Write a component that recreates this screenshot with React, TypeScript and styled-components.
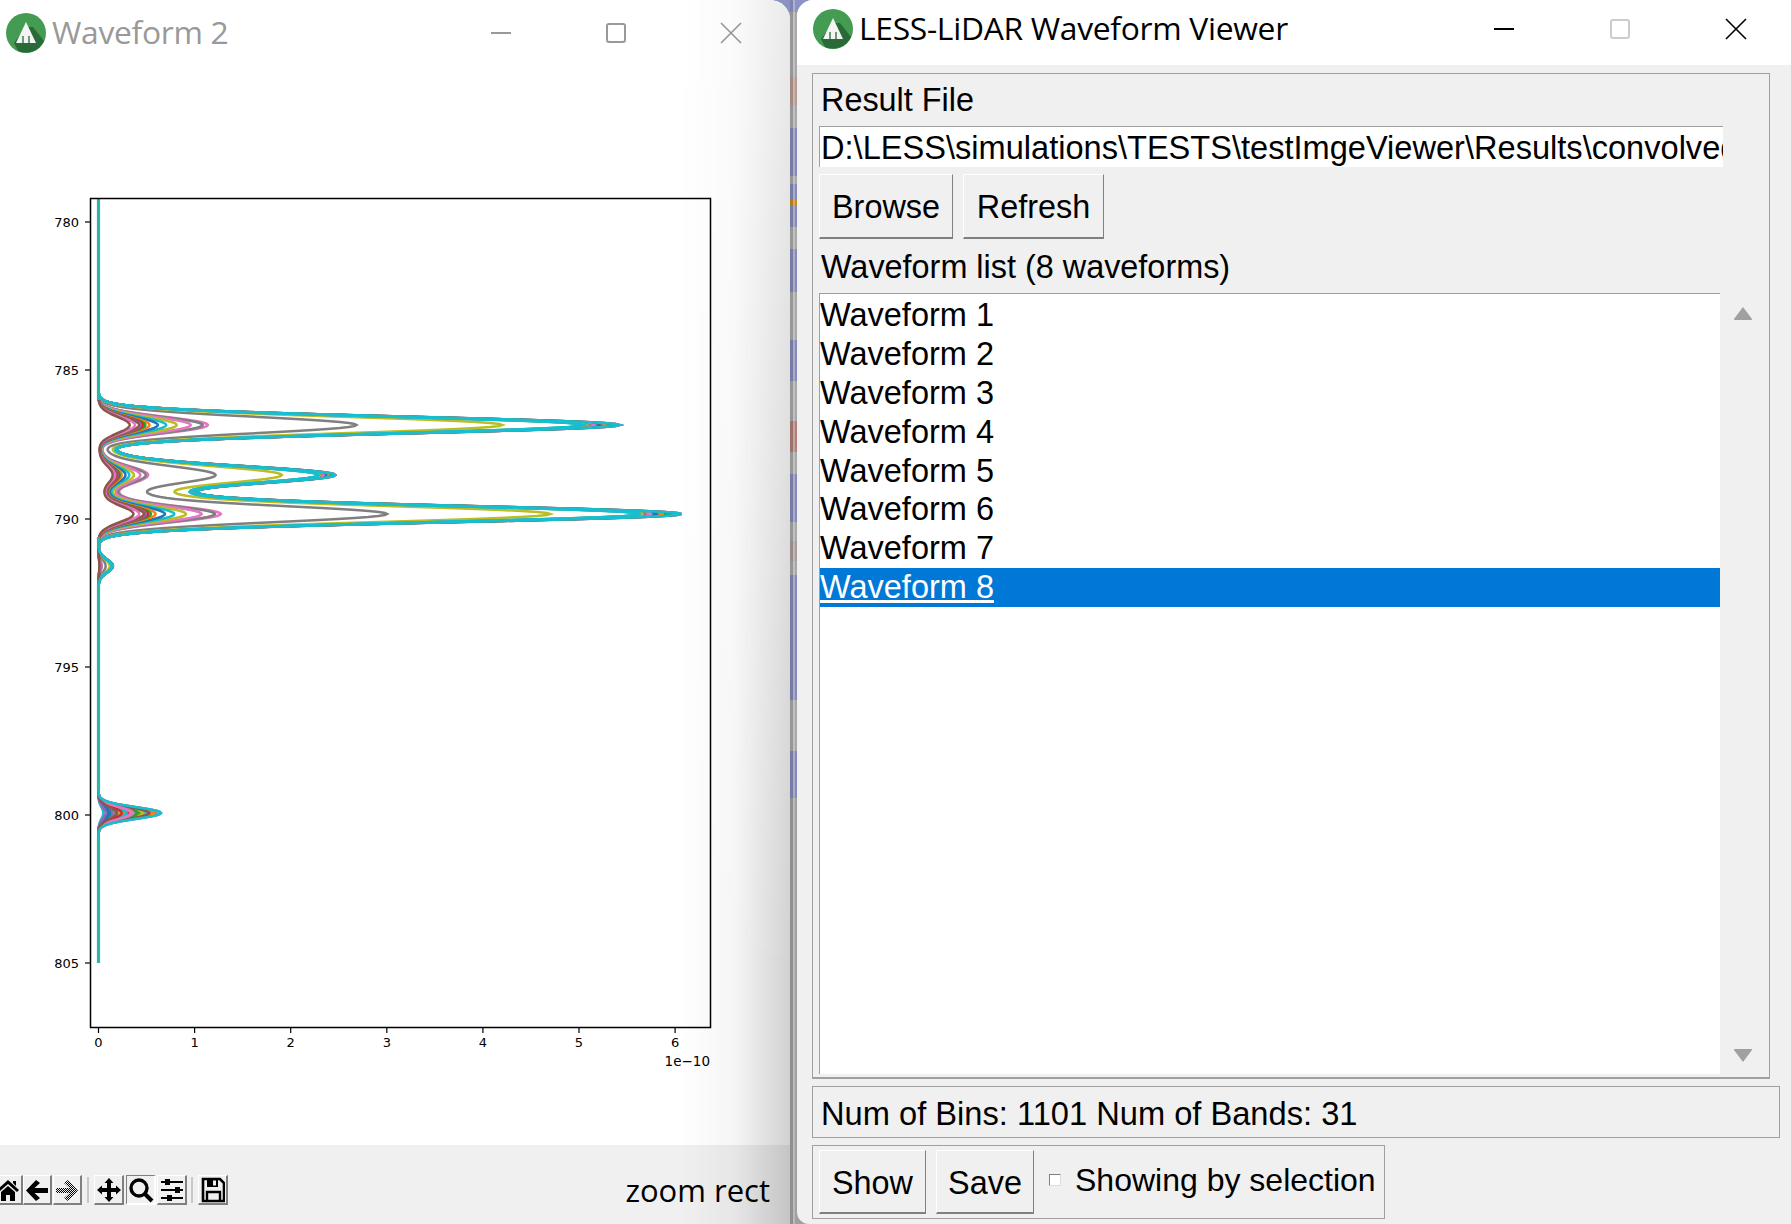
import React from 'react'
import styled, { createGlobalStyle } from 'styled-components'

const GlobalStyle = createGlobalStyle`
  html, body {
    margin: 0;
    padding: 0;
    width: 1791px;
    height: 1224px;
    overflow: hidden;
    background: #9a9a9a;
  }
`

const Desktop = styled.div`
  display: flex;
  width: 1791px;
  height: 1224px;
  overflow: hidden;
  background-color: #a6a6a6;
  background-image:
    linear-gradient(to right,
      transparent 790px, rgba(0, 0, 0, 0.1) 790px, rgba(0, 0, 0, 0.1) 793px,
      rgba(255, 255, 255, 0.28) 793px, rgba(255, 255, 255, 0.28) 795px, transparent 795px),
    linear-gradient(to bottom,
      #8d92c4 0, #8d92c4 12px, #a8a8a8 12px, #a8a8a8 77px, #b59a90 77px, #b59a90 105px,
      #a8a8a8 105px, #a8a8a8 128px, #858ab8 128px, #858ab8 176px, #a8a8a8 176px, #a8a8a8 184px,
      #858ab8 184px, #858ab8 200px, #c88a20 200px, #c88a20 206px, #858ab8 206px, #858ab8 227px,
      #a8a8a8 227px, #a8a8a8 249px, #858ab8 249px, #858ab8 292px, #a8a8a8 292px, #a8a8a8 340px,
      #858ab8 340px, #858ab8 381px, #a8a8a8 381px, #a8a8a8 421px, #b07f78 421px, #b07f78 452px,
      #a8a8a8 452px, #a8a8a8 474px, #858ab8 474px, #858ab8 522px, #a8a8a8 522px, #a8a8a8 541px,
      #a89c98 541px, #a89c98 561px, #a8a8a8 561px, #a8a8a8 575px, #858ab8 575px, #858ab8 700px,
      #a8a8a8 700px, #a8a8a8 751px, #858ab8 751px, #858ab8 798px, #a0a0a0 798px, #a0a0a0 1224px);
  font-family: "Liberation Sans", Arial, sans-serif;
`
const LeftWindow = styled.div`
  position: relative;
  display: flex;
  flex-direction: column;
  flex: none;
  width: 790px;
  height: 1224px;
  background: #fff;
  border-top-right-radius: 20px;
  overflow: hidden;

  &::after {
    content: '';
    position: absolute;
    top: 0;
    right: 0;
    bottom: 0;
    width: 110px;
    background: linear-gradient(to right, rgba(0, 0, 0, 0), rgba(0, 0, 0, 0.04) 50%, rgba(0, 0, 0, 0.18));
    -webkit-mask-image: linear-gradient(to bottom, rgba(0, 0, 0, 0.45), #000 80%);
    mask-image: linear-gradient(to bottom, rgba(0, 0, 0, 0.45), #000 80%);
    pointer-events: none;
  }
`
const RightWindow = styled.div`
  display: flex;
  flex-direction: column;
  flex: none;
  width: 994px;
  height: 1224px;
  margin-left: 7px;
  background: #f0f0f0;
  border-top-left-radius: 16px;
  border-bottom-left-radius: 12px;
  overflow: hidden;
`
const TitleBar = styled.div<{ $left: number; $height: number; $lift?: number; $inactive?: boolean }>`
  display: flex;
  flex: none;
  box-sizing: border-box;
  align-items: center;
  gap: 6px;
  height: ${(p) => p.$height}px;
  padding-left: ${(p) => p.$left}px;
  padding-bottom: ${(p) => p.$lift ?? 0}px;
  background: #fff;
  color: ${(p) => (p.$inactive ? '#999' : '#000')};
`
const TitleText = styled.span`
  margin-bottom: 3px;
  font-family: "Open Sans", sans-serif;
  font-size: 31.8px;
  letter-spacing: -0.3px;
  white-space: nowrap;
`
const Controls = styled.div<{ $gap: number; $right: number }>`
  display: flex;
  align-items: center;
  gap: ${(p) => p.$gap}px;
  margin-left: auto;
  margin-right: ${(p) => p.$right}px;
`
const Canvas = styled.div`
  flex: 1;
  min-height: 0;

  svg {
    display: block;
  }
`
const Toolbar = styled.div`
  display: flex;
  flex: none;
  box-sizing: border-box;
  align-items: center;
  height: 79px;
  padding: 11px 20px 0 0;
  background: #f0f0f0;
`
const ToolButton = styled.div<{ $sunken?: boolean; $width?: number; $gapAfter?: number }>`
  display: flex;
  flex: none;
  align-items: center;
  justify-content: center;
  box-sizing: border-box;
  width: ${(p) => p.$width ?? 30}px;
  height: 30px;
  margin-right: ${(p) => p.$gapAfter ?? 0}px;
  border-style: solid;
  border-width: 1px 2px 2px 1px;
  border-color: ${(p) => (p.$sunken ? '#808080 #fff #fff #808080' : '#fff #808080 #808080 #fff')};

  &:first-child {
    margin-left: -7px;
  }
`
const ToolSeparator = styled.div<{ $before: number }>`
  flex: none;
  width: 2px;
  height: 26px;
  margin: 0 5px 0 ${(p) => p.$before}px;
  background: #c8c8c8;
`
const ToolMessage = styled.span`
  margin-left: auto;
  font-family: "Open Sans", sans-serif;
  font-size: 31px;
  color: #000;
`
const Body = styled.div`
  display: flex;
  flex: 1;
  flex-direction: column;
  min-height: 0;
  padding: 8px 12px 6px 15px;
`
const Group = styled.div`
  box-sizing: border-box;
  display: flex;
  flex-direction: column;
  flex: none;
  height: 1006px;
  width: 958px;
  padding: 0 0 3px 6px;
  border: 1px solid #a0a0a0;
  border-bottom-width: 2px;
`
const FieldLabel = styled.div`
  flex: none;
  height: 52px;
  padding-left: 2px;
  font-size: 32.4px;
  line-height: 52px;
  color: #000;
  white-space: nowrap;
`
const PathField = styled.div`
  box-sizing: border-box;
  flex: none;
  width: 904px;
  height: 41px;
  padding-left: 1px;
  overflow: hidden;
  background: #fff;
  border-top: 1px solid #a0a0a0;
  border-left: 1px solid #a0a0a0;
  font-size: 32.6px;
  line-height: 42px;
  color: #000;
  white-space: nowrap;
`
const ButtonRow = styled.div`
  display: flex;
  flex: none;
  gap: 10px;
  margin: 7px 0 2px;
`
const PushButton = styled.div<{ $width: number; $height: number; $textHeight: number }>`
  box-sizing: border-box;
  flex: none;
  width: ${(p) => p.$width}px;
  height: ${(p) => p.$height}px;
  border-style: solid;
  border-width: 1px 1px 2px 1px;
  border-color: #fff #808080 #808080 #fff;
  font-size: 32.4px;
  line-height: ${(p) => p.$textHeight}px;
  text-align: center;
  color: #000;
`
const ListArea = styled.div`
  display: flex;
  flex: 1;
  min-height: 0;
`
const ListBox = styled.div`
  box-sizing: border-box;
  flex: none;
  width: 901px;
  padding-top: 2px;
  background: #fff;
  border-top: 1px solid #a0a0a0;
  border-left: 1px solid #a0a0a0;
`
const ListRow = styled.div<{ $selected?: boolean }>`
  height: 38.9px;
  background: ${(p) => (p.$selected ? '#0078d7' : 'transparent')};
  color: ${(p) => (p.$selected ? '#fff' : '#000')};
  font-size: 32.5px;
  line-height: 39px;
  white-space: nowrap;
  text-decoration: ${(p) => (p.$selected ? 'underline' : 'none')};
`
const ScrollColumn = styled.div`
  display: flex;
  flex: 1;
  flex-direction: column;
  align-items: center;
  justify-content: space-between;
  padding: 13px 3px 11px 0;
`
const StatusBox = styled.div`
  box-sizing: border-box;
  flex: none;
  width: 968px;
  height: 52px;
  margin-top: 7px;
  padding-left: 8px;
  border: 1px solid #a0a0a0;
  font-size: 32.65px;
  line-height: 53px;
  color: #000;
  white-space: nowrap;
`
const ActionBox = styled.div`
  box-sizing: border-box;
  display: flex;
  flex: none;
  align-items: flex-start;
  gap: 10px;
  width: 573px;
  height: 74px;
  margin-top: 7px;
  padding: 4px 6px;
  border: 1px solid #a0a0a0;
`
const CheckRow = styled.div`
  display: flex;
  align-items: center;
  gap: 14px;
  height: 60px;
  margin-left: 5px;
  font-size: 32px;
  color: #000;
  white-space: nowrap;
`
const CheckMark = styled.div`
  box-sizing: border-box;
  flex: none;
  width: 12px;
  height: 12px;
  background: #fff;
  border-top: 1px solid #808080;
  border-left: 1px solid #808080;
  border-right: 1px solid #ddd;
  border-bottom: 1px solid #ddd;
`

const LogoIcon: React.FC = () => (
  <svg width="40" height="40" viewBox="0 0 40 40">
    <circle cx="20" cy="20" r="20" fill="#449c53" />
    <path d="M8 30 L20 14 L27 14 L38 28 A20 20 0 0 1 12 38 Z" fill="#2a6a38" />
    <path d="M20 9 L30 30 L10 30 Z" fill="#f4f4f4" />
    <rect x="16" y="23" width="2" height="7" fill="#6d9a75" />
    <rect x="22" y="23" width="2" height="7" fill="#6d9a75" />
  </svg>
)

const WindowButtons: React.FC<{ color: string; maxColor: string; gap: number; right: number }> = ({ color, maxColor, gap, right }) => (
  <Controls $gap={gap} $right={right}>
    <svg width="22" height="22" viewBox="0 0 22 22">
      <path d="M1 11 H21" stroke={color} strokeWidth="2" />
    </svg>
    <svg width="22" height="22" viewBox="0 0 22 22">
      <rect x="2" y="2" width="18" height="18" rx="2" fill="none" stroke={maxColor} strokeWidth="2" />
    </svg>
    <svg width="22" height="22" viewBox="0 0 22 22">
      <path d="M1 1 L21 21 M21 1 L1 21" stroke={color} strokeWidth="1.6" fill="none" />
    </svg>
  </Controls>
)

const HomeIcon = () => (
  <svg width="24" height="24" viewBox="0 0 24 24">
    <path d="M12 2 L23 12 L21 14 L12 6 L3 14 L1 12 Z M17 3 H20 V8 L17 5 Z" fill="#000" />
    <path d="M5 14 L12 8 L19 14 V23 H14 V17 H10 V23 H5 Z" fill="#000" />
  </svg>
)
const BackIcon = () => (
  <svg width="24" height="24" viewBox="0 0 24 24">
    <path d="M11 2 L15 5 L9.5 10 H23 V15 H9.5 L15 20 L11 23 L1 12.5 Z" fill="#000" />
  </svg>
)
const ForwardIcon = () => (
  <svg width="24" height="24" viewBox="0 0 24 24">
    <defs>
      <pattern id="dither" width="2" height="2" patternUnits="userSpaceOnUse">
        <rect width="1" height="1" fill="#000" />
        <rect x="1" y="1" width="1" height="1" fill="#000" />
      </pattern>
    </defs>
    <path d="M13 2 L9 5 L14.5 10 H1 V15 H14.5 L9 20 L13 23 L23 12.5 Z" fill="url(#dither)" />
  </svg>
)
const MoveIcon = () => (
  <svg width="26" height="26" viewBox="0 0 26 26">
    <path d="M13 1 L17.5 6 H15 V11 H20 V8.5 L25 13 L20 17.5 V15 H15 V20 H17.5 L13 25 L8.5 20 H11 V15 H6 V17.5 L1 13 L6 8.5 V11 H11 V6 H8.5 Z" fill="#000" />
  </svg>
)
const ZoomIcon = () => (
  <svg width="26" height="26" viewBox="0 0 26 26">
    <circle cx="11" cy="11" r="8" fill="none" stroke="#000" strokeWidth="3.4" />
    <path d="M16.5 16.5 L24 24" stroke="#000" strokeWidth="4" />
  </svg>
)
const SlidersIcon = () => (
  <svg width="26" height="26" viewBox="0 0 26 26">
    <path d="M2 5 H24 M2 13 H24 M2 21 H24" stroke="#000" strokeWidth="2" />
    <rect x="6" y="2" width="5" height="6" fill="#000" />
    <rect x="16" y="10" width="5" height="6" fill="#000" />
    <rect x="8" y="18" width="5" height="6" fill="#000" />
  </svg>
)
const SaveIcon = () => (
  <svg width="24" height="26" viewBox="0 0 24 26">
    <path d="M2 2 H19 L23 6 V24 H2 Z" fill="none" stroke="#000" strokeWidth="2.6" />
    <path d="M6 2 H17 V10 H6 Z" fill="#000" />
    <rect x="12" y="3.5" width="3" height="5" fill="#f0f0f0" />
    <path d="M6 24 V15 H19 V24" fill="none" stroke="#000" strokeWidth="2.4" />
  </svg>
)

const ArrowUp = () => (
  <svg width="20" height="15" viewBox="0 0 20 15">
    <path d="M10 1 L19 13 Q19.5 14 18 14 H2 Q0.5 14 1 13 Z" fill="#a0a0a0" />
  </svg>
)
const ArrowDown = () => (
  <svg width="20" height="15" viewBox="0 0 20 15">
    <path d="M10 14 L19 2 Q19.5 1 18 1 H2 Q0.5 1 1 2 Z" fill="#a0a0a0" />
  </svg>
)

// curves: [colour, share of the highest peak], drawn in this order
const BANDS: [string, number][] = [
  ['#7f7f7f', 0.495],
  ['#bcbd22', 0.775],
  ['#d62728', 1.0],
  ['#9467bd', 1.0],
  ['#8c564b', 0.99],
  ['#2ca02c', 0.98],
  ['#ff7f0e', 0.97],
  ['#1f77b4', 0.96],
  ['#e377c2', 0.95],
  ['#7f7f7f', 0.94],
  ['#bcbd22', 0.935],
  ['#17becf', 1.0],
  ['#17becf', 0.93],
  ['#e377c2', 0.21],
  ['#7f7f7f', 0.2],
  ['#e377c2', 0.177],
  ['#bcbd22', 0.15],
  ['#17becf', 0.13],
  ['#1f77b4', 0.114],
  ['#ff7f0e', 0.098],
  ['#2ca02c', 0.09],
  ['#d62728', 0.085],
  ['#9467bd', 0.081],
  ['#8c564b', 0.078],
  ['#e377c2', 0.07],
  ['#8c564b', 0.06],
]

const gauss = (y: number, c: number, s: number) => Math.exp(-((y - c) ** 2) / (2 * s * s))

const mainPulse = (y: number) =>
  5.42 * gauss(y, 425, 8.2) +
  2.46 * gauss(y, 475, 9) +
  6.06 * gauss(y, 514, 8.2) +
  0.1 * gauss(y, 453, 6) +
  0.5 * gauss(y, 495, 6) +
  0.15 * gauss(y, 566, 6.5)

const xOf = (v: number) => 98.5 + v * 96.1

const Curve: React.FC<{ color: string; share: number; late: number }> = ({ color, share, late }) => {
  const pts: string[] = []
  for (let y = 198; y <= 963; y += 1) {
    const v = share * mainPulse(y) + late * gauss(y, 813, 5.8)
    pts.push(`${xOf(v).toFixed(2)},${y}`)
  }
  return <polyline points={pts.join(' ')} fill="none" stroke={color} strokeWidth={2.5} />
}

const yTicks = [
  { label: '780', y: 222 },
  { label: '785', y: 370 },
  { label: '790', y: 519 },
  { label: '795', y: 667 },
  { label: '800', y: 815 },
  { label: '805', y: 963 },
]
const xTicks = [0, 1, 2, 3, 4, 5, 6]

const WaveChart: React.FC = () => {
  const n = BANDS.length
  const base = xOf(0)
  // chart coordinates are page coordinates, the canvas starts below the title bar
  return (
    <svg width="790" height="1079" viewBox="0 66 790 1079" fontFamily="'DejaVu Sans', sans-serif" fontSize="13" fill="#000">
      {BANDS.map(([color, share], i) => (
        <Curve key={i} color={color} share={share} late={0.05 + (0.6 * (n - 1 - ((i * 7) % n))) / (n - 1)} />
      ))}
      <Curve color="#17becf" share={0.93} late={0.65} />
      <line x1={base} x2={base} y1="198" y2="400" stroke="#2fb5a8" strokeWidth="3.2" />
      <line x1={base} x2={base} y1="537" y2="548" stroke="#2fb5a8" strokeWidth="3.2" />
      <line x1={base} x2={base} y1="585" y2="790" stroke="#2fb5a8" strokeWidth="3.2" />
      <line x1={base} x2={base} y1="836" y2="963" stroke="#2fb5a8" strokeWidth="3.2" />
      <rect x="90.5" y="198.5" width="620" height="829" fill="none" stroke="#000" strokeWidth="1.5" />
      {yTicks.map((t) => (
        <g key={t.label}>
          <line x1="85" x2="90" y1={t.y} y2={t.y} stroke="#000" strokeWidth="1.2" />
          <text x="79" y={t.y + 4.5} textAnchor="end">{t.label}</text>
        </g>
      ))}
      {xTicks.map((t) => (
        <g key={t}>
          <line x1={xOf(t)} x2={xOf(t)} y1="1028" y2="1033" stroke="#000" strokeWidth="1.2" />
          <text x={xOf(t)} y="1047" textAnchor="middle">{t}</text>
        </g>
      ))}
      <text x="710" y="1066" textAnchor="end" fontSize="13.5">1e−10</text>
    </svg>
  )
}

const waveforms = [1, 2, 3, 4, 5, 6, 7, 8]

export default function App() {
  return (
    <Desktop>
      <GlobalStyle />
      <LeftWindow>
        <TitleBar $left={6} $height={66} $inactive>
          <LogoIcon />
          <TitleText>Waveform 2</TitleText>
          <WindowButtons color="#999" maxColor="#999" gap={93} right={48} />
        </TitleBar>
        <Canvas>
          <WaveChart />
        </Canvas>
        <Toolbar>
          <ToolButton><HomeIcon /></ToolButton>
          <ToolButton $width={29} $gapAfter={1}><BackIcon /></ToolButton>
          <ToolButton $width={29}><ForwardIcon /></ToolButton>
          <ToolSeparator $before={5} />
          <ToolButton $gapAfter={2}><MoveIcon /></ToolButton>
          <ToolButton $sunken $gapAfter={1}><ZoomIcon /></ToolButton>
          <ToolButton><SlidersIcon /></ToolButton>
          <ToolSeparator $before={4} />
          <ToolButton><SaveIcon /></ToolButton>
          <ToolMessage>zoom rect</ToolMessage>
        </Toolbar>
      </LeftWindow>
      <RightWindow>
        <TitleBar $left={16} $height={65} $lift={7}>
          <LogoIcon />
          <TitleText>LESS-LiDAR Waveform Viewer</TitleText>
          <WindowButtons color="#000" maxColor="#ccc" gap={94} right={44} />
        </TitleBar>
        <Body>
          <Group>
            <FieldLabel>Result File</FieldLabel>
            <PathField>D:\LESS\simulations\TESTS\testImgeViewer\Results\convolved_waveforms.txt</PathField>
            <ButtonRow>
              <PushButton $width={134} $height={65} $textHeight={64}>Browse</PushButton>
              <PushButton $width={141} $height={65} $textHeight={64}>Refresh</PushButton>
            </ButtonRow>
            <FieldLabel>Waveform list (8 waveforms)</FieldLabel>
            <ListArea>
              <ListBox>
                {waveforms.map((n) => (
                  <ListRow key={n} $selected={n === 8}>Waveform {n}</ListRow>
                ))}
              </ListBox>
              <ScrollColumn>
                <ArrowUp />
                <ArrowDown />
              </ScrollColumn>
            </ListArea>
          </Group>
          <StatusBox>Num of Bins: 1101 Num of Bands: 31</StatusBox>
          <ActionBox>
            <PushButton $width={107} $height={64} $textHeight={65}>Show</PushButton>
            <PushButton $width={98} $height={64} $textHeight={65}>Save</PushButton>
            <CheckRow>
              <CheckMark />
              Showing by selection
            </CheckRow>
          </ActionBox>
        </Body>
      </RightWindow>
    </Desktop>
  )
}
